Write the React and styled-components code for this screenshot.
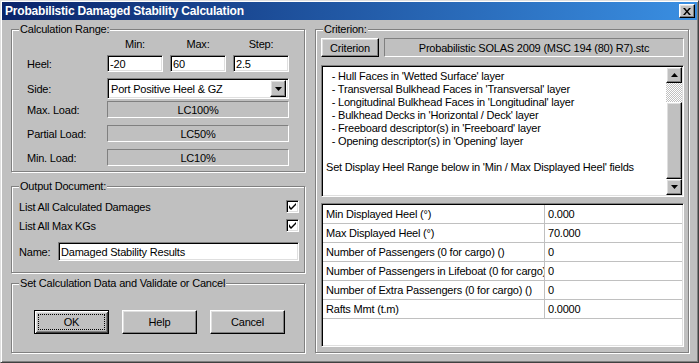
import React from 'react';
import styled, { createGlobalStyle, css } from 'styled-components';

const Global = createGlobalStyle`
  html, body { margin: 0; padding: 0; background: #c0c0c0; }
  body { font-family: "Liberation Sans", Arial, sans-serif; font-size: 11px; color: #000; }
  * { box-sizing: border-box; }
`;

const sunken = css`
  border: 1px solid;
  border-color: #808080 #fff #fff #808080;
  box-shadow: inset 1px 1px #000, inset -1px -1px #dfdfdf;
`;

const raised = css`
  border: 1px solid;
  border-color: #fff #000 #000 #fff;
  box-shadow: inset -1px -1px #808080, inset 1px 1px #dfdfdf;
`;

const Window = styled.div`
  width: 699px;
  height: 363px;
  background: #c0c0c0;
  border: 1px solid;
  border-color: #dfdfdf #404040 #404040 #dfdfdf;
  box-shadow: inset 1px 1px #fff, inset -1px -1px #808080;
  padding: 1px;
  display: flex;
  flex-direction: column;
  letter-spacing: -0.2px;
`;

const TitleBar = styled.div`
  height: 18px;
  flex: none;
  display: flex;
  align-items: center;
  justify-content: space-between;
  padding: 0 2px 0 3px;
  background: linear-gradient(to right, #0a246a, #3a8fe2);
  color: #fff;
  font-weight: bold;
  font-size: 12px;
  letter-spacing: -0.2px;
`;

const CloseBtn = styled.div`
  width: 16px;
  height: 14px;
  background: #c0c0c0;
  ${raised};
  display: flex;
  align-items: center;
  justify-content: center;
`;

const Content = styled.div`
  flex: 1;
  display: flex;
  gap: 10px;
  padding: 9px 8px 0 9px;
`;

const Column = styled.div`
  width: 294px;
  display: flex;
  flex-direction: column;
`;

const Group = styled.div`
  position: relative;
  border: 1px solid #808080;
  box-shadow: inset 1px 1px #fff, 1px 1px #fff;
  height: ${(p) => p.$h}px;
  margin-top: ${(p) => p.$mt || 0}px;
  padding: ${(p) => p.$pad};
  flex: none;
  width: ${(p) => p.$w || 'auto'};
`;

const Caption = styled.span`
  position: absolute;
  top: -8px;
  left: 7px;
  padding: 0 1px;
  background: #c0c0c0;
  line-height: 14px;
`;

const FormRow = styled.div`
  display: grid;
  grid-template-columns: 73px 56px 56px 56px;
  column-gap: 7px;
  height: ${(p) => p.$h}px;
  margin-top: ${(p) => p.$mt || 0}px;
  align-items: center;
`;

const Label = styled.span`
  white-space: nowrap;
`;

const ColHead = styled.span`
  text-align: center;
`;

const TextInput = styled.div`
  height: ${(p) => p.$h || 17}px;
  background: #fff;
  ${sunken};
  padding: 0 2px;
  display: flex;
  align-items: center;
  white-space: nowrap;
  overflow: hidden;
  flex: ${(p) => (p.$grow ? 1 : 'none')};
`;

const Select = styled.div`
  grid-column: 2 / 5;
  height: 21px;
  background: #fff;
  ${sunken};
  padding: 2px 2px 2px 3px;
  display: flex;
  align-items: center;
  justify-content: space-between;
`;

const ArrowBtn = styled.div`
  width: 16px;
  height: ${(p) => p.$h || 17}px;
  background: #c0c0c0;
  ${raised};
  display: flex;
  align-items: center;
  justify-content: center;
  flex: none;
`;

const StaticField = styled.div`
  grid-column: ${(p) => (p.$span ? '2 / 5' : 'auto')};
  flex: ${(p) => (p.$grow ? 1 : 'none')};
  height: ${(p) => p.$h || 17}px;
  border: 1px solid;
  border-color: #808080 #fff #fff #808080;
  display: flex;
  align-items: center;
  justify-content: center;
  white-space: nowrap;
`;

const CheckRow = styled.div`
  display: flex;
  align-items: center;
  justify-content: space-between;
  height: 13px;
  margin-top: ${(p) => p.$mt || 0}px;
`;

const CheckBox = styled.div`
  width: 13px;
  height: 13px;
  background: #fff;
  ${sunken};
  display: flex;
  align-items: center;
  justify-content: center;
`;

const NameRow = styled.div`
  display: flex;
  align-items: center;
  height: 19px;
  margin-top: 10px;
`;

const NameLabel = styled.span`
  width: 39px;
  flex: none;
`;

const ButtonRow = styled.div`
  display: flex;
  gap: 13px;
`;

const Button = styled.div`
  position: relative;
  width: ${(p) => p.$w || 75}px;
  height: ${(p) => p.$h || 24}px;
  flex: none;
  background: #c0c0c0;
  display: flex;
  align-items: center;
  justify-content: center;
  ${(p) =>
    p.$default
      ? css`
          border: 1px solid #000;
          box-shadow: inset 1px 1px #fff, inset -1px -1px #404040, inset 2px 2px #dfdfdf, inset -2px -2px #808080;
          &::after {
            content: '';
            position: absolute;
            inset: 3px;
            border: 1px dotted #000;
          }
        `
      : raised};
`;

const TopRow = styled.div`
  display: flex;
  gap: 5px;
  height: 19px;
`;

const Memo = styled.div`
  margin-top: 8px;
  height: 132px;
  background: #fff;
  ${sunken};
  padding: 1px;
  display: flex;
`;

const MemoText = styled.div`
  flex: 1;
  padding: 3px 3px;
  line-height: 13px;
  white-space: pre;
  overflow: hidden;
`;

const ScrollBar = styled.div`
  width: 16px;
  display: flex;
  flex-direction: column;
`;

const Track = styled.div`
  height: ${(p) => p.$h}px;
  flex: none;
  background: repeating-conic-gradient(#fff 0 25%, #c0c0c0 0 50%) 0 0 / 2px 2px;
`;

const Thumb = styled.div`
  flex: 1;
  background: #c0c0c0;
  ${raised};
`;

const Grid = styled.div`
  margin-top: 6px;
  height: 144px;
  background: #fff;
  ${sunken};
  padding: 1px;
`;

const GridRow = styled.div`
  display: grid;
  grid-template-columns: 222px 1fr;
  height: 19px;
  border-bottom: 1px solid #c0c0c0;
`;

const Cell = styled.div`
  padding-left: ${(p) => p.$pl}px;
  display: flex;
  align-items: center;
  white-space: nowrap;
  overflow: hidden;
  border-right: ${(p) => (p.$divider ? '1px solid #c0c0c0' : 'none')};
`;

const Tri = ({ up }) => (
  <svg width="7" height="4" viewBox="0 0 7 4">
    <path d={up ? 'M3.5 0 L7 4 L0 4 Z' : 'M0 0 L7 0 L3.5 4 Z'} fill="#000" />
  </svg>
);

const Check = () => (
  <svg width="7" height="7" viewBox="0 0 7 7">
    <path d="M0 2 L0 5 L2 7 L7 2 L7 0 L2 5 Z" fill="#000" />
  </svg>
);

const memoLines = [
  "  - Hull Faces in 'Wetted Surface' layer",
  "  - Transversal Bulkhead Faces in 'Transversal' layer",
  "  - Longitudinal Bulkhead Faces in 'Longitudinal' layer",
  "  - Bulkhead Decks in 'Horizontal / Deck' layer",
  "  - Freeboard descriptor(s) in 'Freeboard' layer",
  "  - Opening descriptor(s) in 'Opening' layer",
  '',
  "Set Display Heel Range below in 'Min / Max Displayed Heel' fields",
];

const rows = [
  ['Min Displayed Heel (°)', '0.000'],
  ['Max Displayed Heel (°)', '70.000'],
  ['Number of Passengers (0 for cargo) ()', '0'],
  ['Number of Passengers in Lifeboat (0 for cargo) ()', '0'],
  ['Number of Extra Passengers (0 for cargo) ()', '0'],
  ['Rafts Mmt (t.m)', '0.0000'],
];

const loads = [
  ['Max. Load:', 'LC100%', 2],
  ['Partial Load:', 'LC50%', 7],
  ['Min. Load:', 'LC10%', 7],
];

export default function App() {
  return (
    <>
      <Global />
      <Window>
        <TitleBar>
          <span>Probabilistic Damaged Stability Calculation</span>
          <CloseBtn>
            <svg width="8" height="7" viewBox="0 0 8 7">
              <path d="M0 0 L2 0 L4 2.5 L6 0 L8 0 L5 3.5 L8 7 L6 7 L4 4.5 L2 7 L0 7 L3 3.5 Z" fill="#000" />
            </svg>
          </CloseBtn>
        </TitleBar>
        <Content>
          <Column>
            <Group $h={143} $pad="7px 0 0 15px">
              <Caption>Calculation Range:</Caption>
              <FormRow $h={14}>
                <span />
                <ColHead>Min:</ColHead>
                <ColHead>Max:</ColHead>
                <ColHead>Step:</ColHead>
              </FormRow>
              <FormRow $h={17} $mt={4}>
                <Label>Heel:</Label>
                <TextInput>-20</TextInput>
                <TextInput>60</TextInput>
                <TextInput>2.5</TextInput>
              </FormRow>
              <FormRow $h={21} $mt={6}>
                <Label>Side:</Label>
                <Select>
                  <span>Port Positive Heel &amp; GZ</span>
                  <ArrowBtn>
                    <Tri />
                  </ArrowBtn>
                </Select>
              </FormRow>
              {loads.map(([l, v, mt]) => (
                <FormRow key={l} $h={17} $mt={mt}>
                  <Label>{l}</Label>
                  <StaticField $span>{v}</StaticField>
                </FormRow>
              ))}
            </Group>
            <Group $h={87} $mt={14} $pad="13px 5px 0 7px">
              <Caption>Output Document:</Caption>
              <CheckRow>
                <span>List All Calculated Damages</span>
                <CheckBox>
                  <Check />
                </CheckBox>
              </CheckRow>
              <CheckRow $mt={6}>
                <span>List All Max KGs</span>
                <CheckBox>
                  <Check />
                </CheckBox>
              </CheckRow>
              <NameRow>
                <NameLabel>Name:</NameLabel>
                <TextInput $h={19} $grow>
                  Damaged Stability Results
                </TextInput>
              </NameRow>
            </Group>
            <Group $h={70} $mt={10} $pad="26px 0 0 22px">
              <Caption>Set Calculation Data and Validate or Cancel</Caption>
              <ButtonRow>
                <Button $default>OK</Button>
                <Button>Help</Button>
                <Button>Cancel</Button>
              </ButtonRow>
            </Group>
          </Column>
          <Group $h={324} $w="374px" $pad="8px 4px 5px 5px">
            <Caption>Criterion:</Caption>
            <TopRow>
              <Button $w={58} $h={19}>Criterion</Button>
              <StaticField $grow $h={19}>
                Probabilistic SOLAS 2009 (MSC 194 (80) R7).stc
              </StaticField>
            </TopRow>
            <Memo>
              <MemoText>{memoLines.join('\n')}</MemoText>
              <ScrollBar>
                <ArrowBtn $h={16}>
                  <Tri up />
                </ArrowBtn>
                <Track $h={19} />
                <Thumb />
                <ArrowBtn $h={16}>
                  <Tri />
                </ArrowBtn>
              </ScrollBar>
            </Memo>
            <Grid>
              {rows.map(([n, v]) => (
                <GridRow key={n}>
                  <Cell $pl={3} $divider>
                    {n}
                  </Cell>
                  <Cell $pl={3}>{v}</Cell>
                </GridRow>
              ))}
            </Grid>
          </Group>
        </Content>
      </Window>
    </>
  );
}
